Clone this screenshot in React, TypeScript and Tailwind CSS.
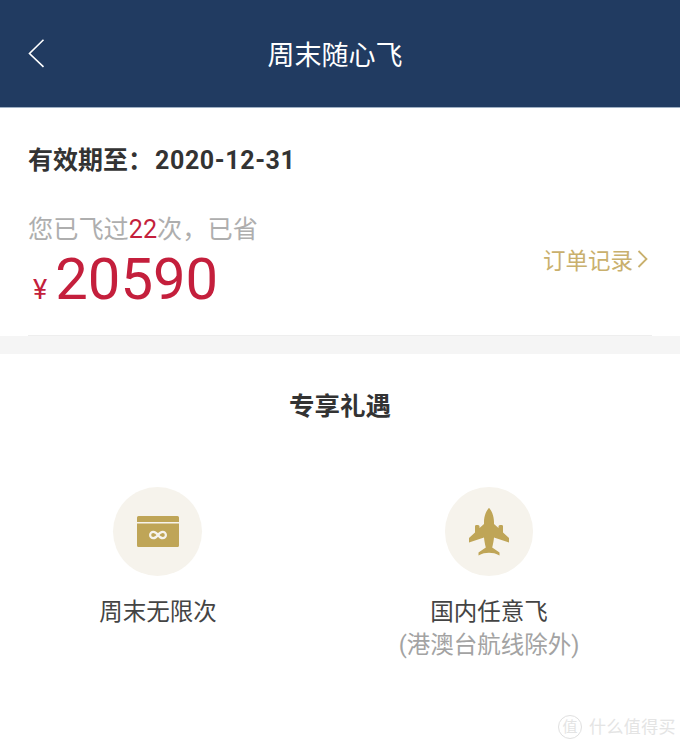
import React from "react";

const font = { fontFamily: 'Roboto, "Noto Sans CJK SC", sans-serif' };

function Back() {
  return (
    <svg width="18" height="30" viewBox="0 0 18 30" fill="none" stroke="#ffffff" strokeWidth="1.6" className="block">
      <path d="M15.500 0.800 L1.500 14.500 L15.500 27.800" />
    </svg>
  );
}

function Chevron() {
  return (
    <svg width="11" height="18" viewBox="0 0 11 18" fill="none" stroke="#c9b06d" strokeWidth="1.8" className="block">
      <path d="M1.500 1 L9.500 9 L1.500 17" />
    </svg>
  );
}

function Card() {
  return (
    <svg width="42" height="31" viewBox="0 0 42 31" className="block">
      <path d="M1.500 0H40.500A1.500 1.500 0 0 1 42 1.500V6H0V1.500A1.500 1.500 0 0 1 1.500 0Z" fill="#bfa557" />
      <path d="M0 7.500H42V29.500A1.500 1.500 0 0 1 40.500 31H1.500A1.500 1.500 0 0 1 0 29.500Z" fill="#bfa557" />
      <path
        d="M21 19C19.600 17 18 15.800 16.300 15.800A3.200 3.200 0 0 0 16.300 22.200C18 22.200 19.600 21 21 19C22.400 17 24 15.800 25.700 15.800A3.200 3.200 0 0 1 25.700 22.200C24 22.200 22.400 21 21 19Z"
        fill="none"
        stroke="#f6f3ec"
        strokeWidth="2.200"
      />
    </svg>
  );
}

function Plane() {
  return (
    <svg width="42" height="48" viewBox="0 0 42 48" className="block">
      <path
        fill="#bfa557"
        d="M21 0C23.500 2 26 8 26 14V16L30.500 20V18.500C30.500 17.500 31.500 17 32.500 17H33.500C34.500 17 35 17.500 35 18.500V24.500L41 30V34.500L26 29.500C25.700 33 25 36 24.200 39.500L31.500 44.500V47.500C28 45.500 24.500 44.800 21 44.800C17.500 44.800 14 45.500 10.500 47.500V44.500L17.800 39.500C17 36 16.300 33 16 29.500L1 34.500V30L7 24.500V18.500C7 17.500 7.500 17 8.500 17H9.500C10.500 17 11.500 17.500 11.500 18.500V20L16 16V14C16 8 18.500 2 21 0Z"
      />
    </svg>
  );
}

export default function App() {
  return (
    <div className="relative w-[680px] h-[749px] bg-white overflow-hidden" style={font}>
      <header className="h-[108px] bg-[#213b61] border-b border-[#9fb0c4] relative">
        <div className="absolute left-[28px] top-[39px]">
          <Back />
        </div>
        <h1 className="w-[670px] text-center text-white text-[27px] leading-[36px] pt-[38px] font-normal">周末随心飞</h1>
      </header>

      <section className="px-[28px] h-[228px] relative">
        <div className="pt-[36px] text-[25px] leading-[34px] font-bold text-[#333333]">
          有效期至：<span className="ml-[2px] tracking-[0.6px]">2020-12-31</span>
        </div>
        <div className="mt-[35px] text-[25.200px] leading-[34px] text-[#aeaeae]">
          您已飞过<span className="text-[#c41f3c]">22</span>次，已省
        </div>
        <div className="flex items-baseline text-[#c41f3c] pl-[5px] mt-[1px]">
          <span className="text-[27px] mr-[8px]">¥</span>
          <span className="text-[58px] leading-[62px]">20590</span>
        </div>
        <div className="absolute right-[32px] top-[137px] flex items-center gap-[4px] text-[#c9b06d] text-[22.500px] leading-[32px]">
          <span>订单记录</span>
          <div className="-mt-[4px]">
            <Chevron />
          </div>
        </div>
        <div className="absolute left-[28px] right-[28px] bottom-0 h-px bg-[#eeeeee]" />
      </section>

      <div className="h-[18px] bg-[#f5f5f5]" />

      <h2 className="text-center text-[25.500px] leading-[34px] font-bold text-[#333333] mt-[35px]">专享礼遇</h2>

      <section className="flex mt-[64px]">
        <div className="w-[315px] flex flex-col items-center">
          <div className="w-[89px] h-[89px] rounded-full bg-[#f6f3ec] flex items-center justify-center">
            <Card />
          </div>
          <div className="mt-[20px] pl-[1px] text-[23.500px] leading-[32px] text-[#444444]">周末无限次</div>
        </div>
        <div className="w-[348px] flex flex-col items-center">
          <div className="w-[88px] h-[89px] rounded-full bg-[#f6f3ec] flex items-center justify-center">
            <Plane />
          </div>
          <div className="mt-[20px] text-[23.500px] leading-[32px] text-[#444444]">国内任意飞</div>
          <div className="mt-[1px] text-[23.500px] leading-[32px] text-[#a3a3a3]">(港澳台航线除外)</div>
        </div>
      </section>

      <div className="absolute right-[4px] bottom-[10px] flex items-center gap-[7px] text-[#e2e2e2] opacity-90">
        <span className="w-[24px] h-[24px] rounded-full border border-[#dddddd] text-[15px] leading-[22px] text-center">值</span>
        <span className="text-[17px] leading-[24px] tracking-[0.4px]">什么值得买</span>
      </div>
    </div>
  );
}
